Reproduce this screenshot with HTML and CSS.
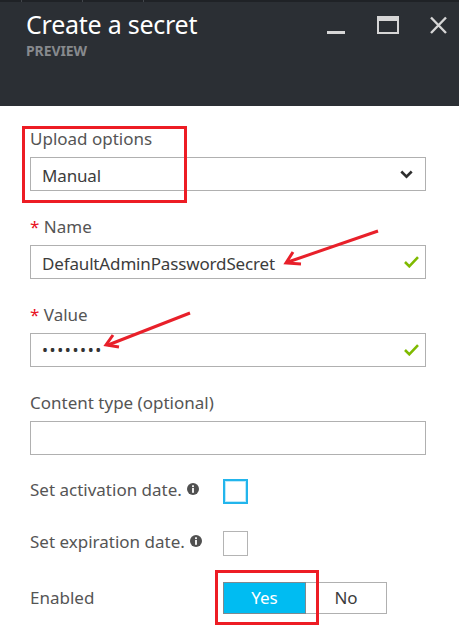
FILE: index.html
```html
<!DOCTYPE html>
<html lang="en">
<head>
<meta charset="utf-8">
<title>Create a secret</title>
<link rel="stylesheet" href="styles.css">
</head>
<body>
<div class="blade">
  <header class="hdr">
    <div class="topstrip"><span class="seg s1"></span><span class="seg s2"></span><span class="seg s3"></span></div>
    <div class="hdr-main">
      <div class="titles">
        <div class="title">Create a secret</div>
        <div class="sub">PREVIEW</div>
      </div>
      <svg class="ctrls" width="120" height="20" viewBox="0 0 120 20">
        <rect x="0" y="15" width="18" height="3" fill="#d6d6d6"/>
        <rect x="50" y="0" width="22" height="18" fill="#d6d6d6"/>
        <rect x="52" y="5" width="18" height="11" fill="#2b2f34"/>
        <path d="M104 1.5 L119 17 M119 1.5 L104 17" stroke="#d6d6d6" stroke-width="2.4" fill="none"/>
      </svg>
    </div>
  </header>

  <main class="form">
    <div class="group">
      <div class="lbl">Upload options</div>
      <div class="field select">
        <span class="val">Manual</span>
        <svg class="chev" width="13" height="9" viewBox="0 0 13 9"><path d="M1.3 1.5 L6.5 6.7 L11.7 1.5" stroke="#2e2e2e" stroke-width="2.6" fill="none"/></svg>
      </div>
    </div>

    <div class="group">
      <div class="lbl"><span class="req">*</span> Name</div>
      <div class="field">
        <span class="val">DefaultAdminPasswordSecret</span>
        <svg class="ok" width="15" height="12" viewBox="0 0 15 12"><path d="M1 6 L5.3 10.3 L14 1.2" stroke="#7fba00" stroke-width="2.6" fill="none"/></svg>
      </div>
    </div>

    <div class="group">
      <div class="lbl"><span class="req">*</span> Value</div>
      <div class="field">
        <span class="val dots">••••••••</span>
        <svg class="ok" width="15" height="12" viewBox="0 0 15 12"><path d="M1 6 L5.3 10.3 L14 1.2" stroke="#7fba00" stroke-width="2.6" fill="none"/></svg>
      </div>
    </div>

    <div class="group">
      <div class="lbl">Content type (optional)</div>
      <div class="field"></div>
    </div>

    <div class="row r1">
      <div class="rlbl up">Set activation date.<svg class="info" width="12" height="12" viewBox="0 0 12 12"><circle cx="6" cy="6" r="6" fill="#505050"/><rect x="5.1" y="2.3" width="1.8" height="1.8" fill="#fff"/><rect x="5.1" y="5" width="1.8" height="4.8" fill="#fff"/></svg></div>
      <div class="cb focus"></div>
    </div>

    <div class="row r2">
      <div class="rlbl up">Set expiration date.<svg class="info" width="12" height="12" viewBox="0 0 12 12"><circle cx="6" cy="6" r="6" fill="#505050"/><rect x="5.1" y="2.3" width="1.8" height="1.8" fill="#fff"/><rect x="5.1" y="5" width="1.8" height="4.8" fill="#fff"/></svg></div>
      <div class="cb"></div>
    </div>

    <div class="row r3">
      <div class="rlbl">Enabled</div>
      <div class="toggle">
        <div class="opt on">Yes</div>
        <div class="opt off">No</div>
      </div>
    </div>
  </main>

  <div class="hl hl-upload"></div>
  <div class="hl hl-yes"></div>
  <svg class="arrows" width="459" height="630" viewBox="0 0 459 630">
    <g stroke="#e8202a" stroke-width="3" fill="none" stroke-linejoin="miter">
      <path d="M378 231 L288 262"/>
      <path d="M293 252 L286 263 L301 264"/>
      <path d="M190 313 L108 345"/>
      <path d="M113 335 L106 345 L119 347"/>
    </g>
  </svg>
</div>
</body>
</html>
```

FILE: styles.css
```css
html, body {
  margin: 0;
  padding: 0;
  background: #ffffff;
}

.blade {
  position: relative;
  width: 459px;
  height: 630px;
  overflow: hidden;
  font-family: "Noto Sans", "Open Sans", sans-serif;
  background: #ffffff;
}

.hdr {
  height: 106px;
  background: #2b2f34;
  box-sizing: border-box;
}

.topstrip {
  height: 2px;
  background: #1f2226;
  display: flex;
}

.seg {
  display: block;
  height: 2px;
  border-right: 1px solid #42464b;
}
.s1 { width: 21px; }
.s2 { width: 60px; }
.s3 { width: 60px; }

.hdr-main {
  display: flex;
  justify-content: space-between;
  align-items: flex-start;
  padding: 7px 12px 0 26px;
}

.title {
  color: #ffffff;
  font-size: 25px;
  line-height: 30px;
  letter-spacing: -0.25px;
  white-space: nowrap;
}

.sub {
  margin-top: 4px;
  color: #878a8e;
  font-size: 14px;
  font-weight: 700;
  line-height: 16px;
  letter-spacing: -0.1px;
}

.ctrls {
  display: block;
  margin-top: 7px;
}

.form {
  padding: 23px 33px 0 30px;
}

.group + .group {
  margin-top: 26px;
}

.lbl {
  font-size: 17px;
  line-height: 20px;
  color: #555555;
  margin-bottom: 8px;
  white-space: nowrap;
}

.req {
  color: #e81123;
}

.field {
  height: 34px;
  box-sizing: border-box;
  border: 1px solid #b0b0b0;
  display: flex;
  align-items: center;
  justify-content: space-between;
  padding: 0 6px 0 11px;
}

.val {
  font-size: 17px;
  line-height: 26px;
  letter-spacing: -0.15px;
  color: #3c3c3c;
  position: relative;
  top: 2px;
  white-space: nowrap;
}

.dots {
  letter-spacing: 1.6px;
  top: 0;
  font-size: 16px;
  color: #333333;
}

.select {
  padding-right: 12px;
}

.chev, .ok {
  display: block;
}

.row {
  display: flex;
  align-items: center;
}

.r1 { margin-top: 24px; }
.r2 { margin-top: 27px; }
.r3 { margin-top: 26px; }

.rlbl {
  width: 193px;
  flex: none;
  font-size: 17px;
  line-height: 20px;
  color: #555555;
  white-space: nowrap;
  display: flex;
  align-items: center;
}

.rlbl.up {
  padding-bottom: 4px;
}

.info {
  display: block;
  margin-left: 5px;
  margin-top: -2px;
}

.cb {
  width: 25px;
  height: 25px;
  box-sizing: border-box;
  border: 1px solid #b4b4b4;
  background: #ffffff;
}

.cb.focus {
  border: 2px solid #22b5ec;
  box-shadow: inset 0 0 0 1px #bdeafb;
}

.toggle {
  display: flex;
}

.opt {
  height: 32px;
  box-sizing: border-box;
  font-size: 17px;
  line-height: 30px;
  text-align: center;
}

.opt.on {
  width: 83px;
  background: #00bcf2;
  border: 1px solid #7d8a90;
  color: #ffffff;
}

.opt.off {
  width: 81px;
  border: 1px solid #b0b0b0;
  border-left: none;
  color: #3c3c3c;
}

.hl {
  position: absolute;
  box-sizing: border-box;
  border: 3px solid #ed1c24;
}

.hl-upload {
  left: 22px;
  top: 126px;
  width: 165px;
  height: 77px;
}

.hl-yes {
  left: 215px;
  top: 570px;
  width: 104px;
  height: 55px;
}

.arrows {
  position: absolute;
  left: 0;
  top: 0;
  pointer-events: none;
}
```
